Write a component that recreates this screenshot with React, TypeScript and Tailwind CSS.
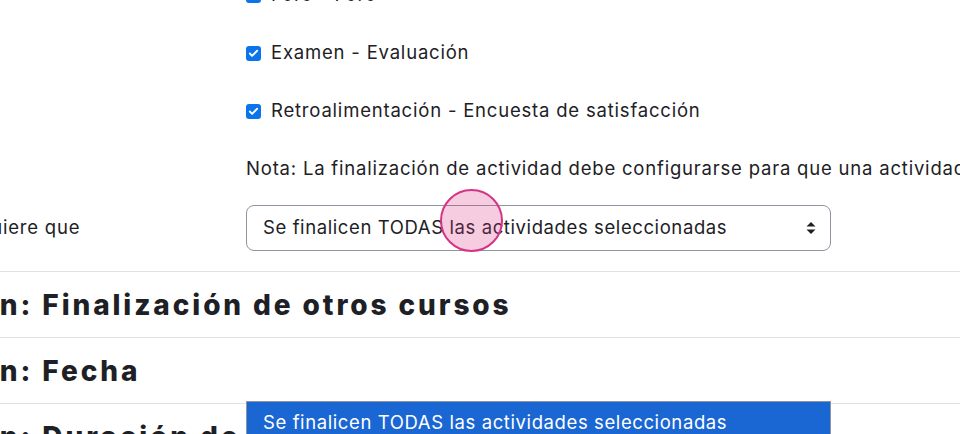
import { Check } from 'lucide-react';

const font = { fontFamily: 'Inter, "Noto Sans", sans-serif' };

const CheckRow = ({ label, h = 'h-[58px]' }: { label: string; h?: string }) => (
    <div className={`${h} flex items-center`}>
        <div className="w-[286px] shrink-0" />
        <div className="flex items-center gap-[10px]">
            <span className="w-[15px] h-[15px] rounded-[3px] bg-[#0b74ec] flex items-center justify-center">
                <Check className="w-[11px] h-[11px] text-white" strokeWidth={4} />
            </span>
            <span className="text-[18.5px] tracking-[0.8px] text-[#1d2125]">{label}</span>
        </div>
    </div>
);

const Section = ({ title }: { title: string }) => (
    <div className="h-[66px] border-t border-[#dee2e6] flex items-center">
        <h3 className="text-[28px] font-extrabold text-[#1d2125] whitespace-nowrap -ml-[107px] tracking-[2.9px]">{title}</h3>
    </div>
);

export default function App() {
    return (
        <div className="w-[960px] h-[434px] overflow-hidden relative bg-white" style={font}>
            <div className="-mt-[34px] -ml-[40px] w-[1100px]">
                <CheckRow label="Foro - Foro" />
                <CheckRow label="Examen - Evaluación" />
                <CheckRow label="Retroalimentación - Encuesta de satisfacción" />
                <div className="h-[58px] flex items-center">
                    <div className="w-[286px] shrink-0" />
                    <p className="text-[18.5px] tracking-[0.8px] text-[#1d2125] whitespace-nowrap">
                        Nota: La finalización de actividad debe configurarse para que una actividad aparezca en la lista anterior.
                    </p>
                </div>
                <div className="h-[60px] flex items-center">
                    <label className="w-[286px] shrink-0 text-[18.5px] tracking-[0.8px] text-[#1d2125]">
                        <span className="block -ml-[5px]">Requiere que</span>
                    </label>
                    <div className="w-[585px] h-[46px] border border-[#8f959e] rounded-[8px] flex items-center justify-between pl-[16px] pr-[14px]">
                        <span className="text-[18.5px] tracking-[0.6px] text-[#1d2125]">Se finalicen TODAS las actividades seleccionadas</span>
                        <svg width="10" height="14" viewBox="0 0 10 14">
                            <path d="M5 1 L9.5 5.5 H0.5 Z" fill="#1d2125" />
                            <path d="M5 13 L9.5 8.5 H0.5 Z" fill="#1d2125" />
                        </svg>
                    </div>
                </div>
                <div className="h-[13px]" />
                <Section title="Condición: Finalización de otros cursos" />
                <Section title="Condición: Fecha" />
                <Section title="Condición: Duración de la matrícula" />
            </div>

            {/* open select listbox */}
            <div className="absolute left-[246px] top-[401px] w-[585px] h-[40px] bg-[#1a66d2] border border-[#8f959e] pl-[16px] pt-[7px]">
                <span className="text-[18.5px] tracking-[0.6px] text-white">Se finalicen TODAS las actividades seleccionadas</span>
            </div>

            {/* cursor highlight */}
            <div className="absolute left-[440px] top-[189px] w-[63px] h-[63px] rounded-full bg-[rgba(214,51,132,0.25)] border-2 border-[#d63384]" />
        </div>
    );
}
